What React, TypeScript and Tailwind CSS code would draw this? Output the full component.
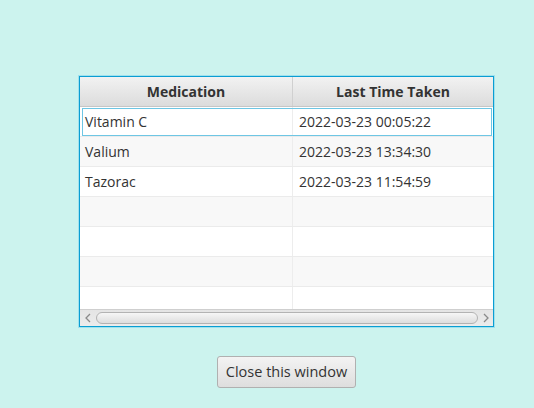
import React from "react";

const rows: [string, string][] = [
  ["Vitamin C", "2022-03-23 00:05:22"],
  ["Valium", "2022-03-23 13:34:30"],
  ["Tazorac", "2022-03-23 11:54:59"],
  ["", ""],
  ["", ""],
  ["", ""],
  ["", ""],
];

export default function App() {
  return (
    <div
      className="w-[534px] h-[408px] bg-[#ccf3ee] pt-[76px] pl-[79px] overflow-hidden"
      style={{ fontFamily: '"Open Sans", "Noto Sans", sans-serif' }}
    >
      <div className="w-[415px] h-[251px] border border-[#0a9ed2] shadow-[0_0_0_1px_#9fe1ee] bg-white flex flex-col overflow-hidden">
        <div className="h-[30px] flex shrink-0 bg-gradient-to-b from-[#f2f2f2] to-[#dcdcdc] border-b border-[#c6c6c6]">
          <div className="w-[213px] border-r border-[#d0d0d0] flex items-center justify-center text-[14px] font-bold text-[#333]">
            Medication
          </div>
          <div className="flex-1 flex items-center justify-center text-[14px] font-bold text-[#333]">
            Last Time Taken
          </div>
        </div>
        <div className="flex-1 flex flex-col overflow-hidden">
          {rows.map((r, i) => (
            <div
              key={i}
              className={`h-[30px] shrink-0 flex relative border-b border-[#ebebeb] ${
                i % 2 === 1 ? "bg-[#f8f8f8]" : "bg-white"
              }`}
            >
              {i === 0 && (
                <div className="absolute left-[2px] right-[1px] top-[1px] bottom-[0px] border border-[#6ec6e4]" />
              )}
              <div className="w-[213px] border-r border-[#ededed] flex items-center pl-[5px] text-[14px] text-[#333]">
                {r[0]}
              </div>
              <div className="flex-1 flex items-center pl-[6px] text-[14px] text-[#333]">
                {r[1]}
              </div>
            </div>
          ))}
        </div>
        <div className="h-[17px] shrink-0 flex items-center bg-gradient-to-b from-[#e4e4e4] to-[#ececec] border-t border-[#cfcfcf]">
          <div className="w-[16px] flex items-center justify-center">
            <svg width="8" height="10" viewBox="0 0 8 10">
              <path d="M6 1 L2 5 L6 9" fill="none" stroke="#8a8a8a" strokeWidth="1.3" />
            </svg>
          </div>
          <div className="flex-1 h-[12px] rounded-[6px] border border-[#b3b3b3] bg-gradient-to-b from-[#f6f6f6] to-[#dedede]" />
          <div className="w-[15px] flex items-center justify-center">
            <svg width="8" height="10" viewBox="0 0 8 10">
              <path d="M2 1 L6 5 L2 9" fill="none" stroke="#8a8a8a" strokeWidth="1.3" />
            </svg>
          </div>
        </div>
      </div>
      <div className="mt-[29px] ml-[138px] w-[139px] h-[32px] rounded-[3px] border border-[#b0b0b0] bg-gradient-to-b from-[#f3f3f3] to-[#dedede] flex items-center justify-center text-[14.5px] text-[#333]">
        Close this window
      </div>
    </div>
  );
}
